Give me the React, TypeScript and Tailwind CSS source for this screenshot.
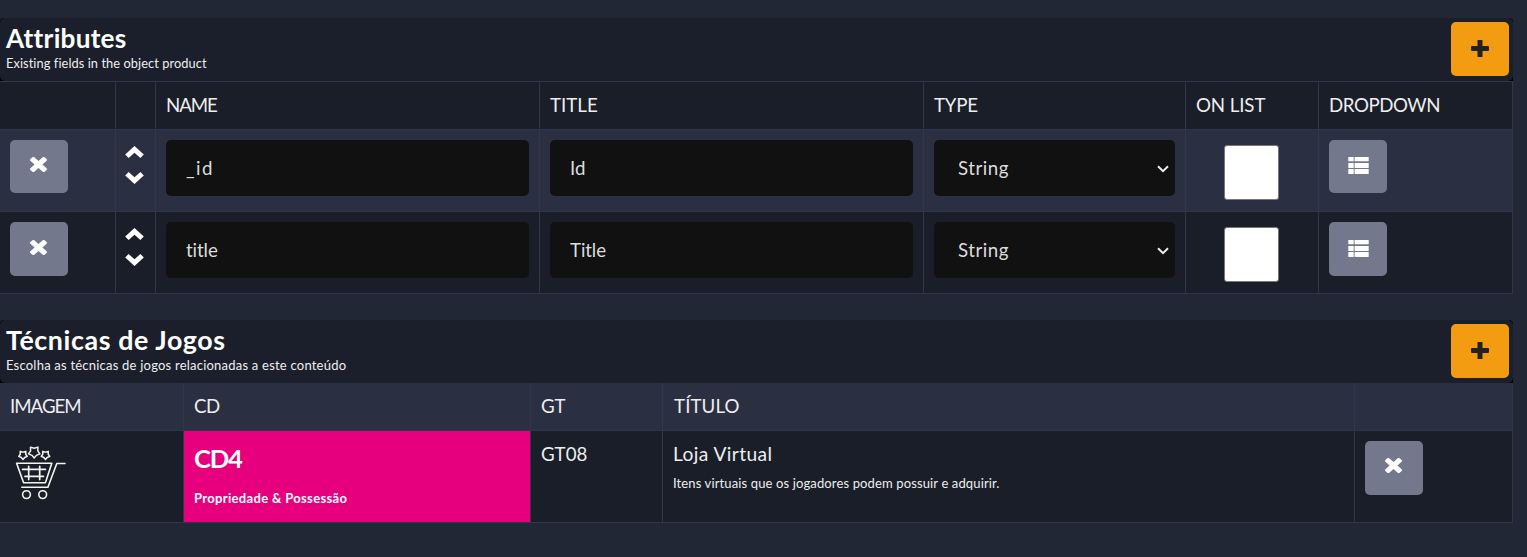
import type { ReactNode } from "react";

function CloseIcon() {
  return (
    <svg className="-ml-px block h-[15px] w-[17px]" viewBox="110 366 1188 1188" preserveAspectRatio="none" fill="currentColor">
      <path d="M1298 1322q0 40-28 68l-136 136q-28 28-68 28t-68-28l-294-294-294 294q-28 28-68 28t-68-28l-136-136q-28-28-28-68t28-68l294-294-294-294q-28-28-28-68t28-68l136-136q28-28 68-28t68 28l294 294 294-294q28-28 68-28t68 28l136 136q28 28 28 68t-28 68l-294 294 294 294q28 28 28 68z" />
    </svg>
  );
}

function PlusIcon() {
  return (
    <svg className="-ml-px block h-[17px] w-[18px]" viewBox="0 0 18 17" fill="currentColor">
      <rect x="0" y="6" width="18" height="5" rx="1" />
      <rect x="6.5" y="0" width="5" height="17" rx="0.6" />
    </svg>
  );
}

function ListIcon() {
  return (
    <svg className="block h-[17px] w-[21px]" viewBox="0 0 21 17" fill="currentColor">
      {[0, 6, 12].map((y) => (
        <g key={y}>
          <rect x="0.3" y={y} width="5.4" height={y === 0 ? 4.2 : 5} rx="0.5" />
          <rect x="6.6" y={y} width="14.1" height={y === 0 ? 4.2 : 5} rx="0.5" />
        </g>
      ))}
    </svg>
  );
}

function Chevron({ down = false }: { down?: boolean }) {
  return (
    <svg className={down ? "block h-3 w-[19px] rotate-180" : "block h-3 w-[19px]"} viewBox="0 0 19 12" fill="currentColor">
      <path d="M9.5 0 18.8 8.5 15.4 12 9.5 6.8 3.6 12 0.2 8.5Z" />
    </svg>
  );
}

function Star({ x, y, r }: { x: number; y: number; r: number }) {
  return (
    <path
      transform={`translate(${x} ${y}) scale(${r})`}
      strokeWidth={1.5 / r}
      d="M0 1 -.36 .56 -.95 .31 -.6 -.18 -.62 -.81 0 -.64 .62 -.81 .6 -.18 .95 .31 .36 .56Z"
    />
  );
}

function CartIcon() {
  return (
    <svg className="block h-[54px] w-[51px]" viewBox="0 0 51 54" fill="none" stroke="#f4f4ee" strokeWidth="1.6" strokeLinejoin="round" strokeLinecap="round">
      <Star x={19.2} y={6} r={6} />
      <Star x={8} y={9} r={4.5} />
      <Star x={30.5} y={9} r={4.5} />
      <path d="M1.6 17.3H36.8L30.4 36.7H8.6ZM50 17.5H41.8L32.9 41.2H6.8" />
      <path d="M7.6 23.4H30.4M10 30.4H28.4M13.7 20.3V33.6M24.7 20.3V33.6" strokeWidth="1.7" />
      <circle cx="11.5" cy="48.6" r="3.9" />
      <circle cx="27.7" cy="48.6" r="3.9" />
    </svg>
  );
}

function GreyButton({ children, className = "h-[54px] pt-[17px]" }: { children: ReactNode; className?: string }) {
  return (
    <button className={`flex w-[58px] justify-center rounded-[5px] bg-[#74788d] text-white ${className}`}>
      {children}
    </button>
  );
}

function PanelHeader({ title, subtitle, titleClass, subClass }: { title: string; subtitle: string; titleClass: string; subClass: string }) {
  return (
    <div className="h-[63px] rounded-t-[4px] bg-black">
      <div className="flex h-full justify-between rounded-[5px] bg-[#1b1f2b] pt-1 pr-1 pl-1.5">
        <div className="whitespace-nowrap">
          <h2 className={`h-8 leading-8 font-bold text-white ${titleClass}`}>{title}</h2>
          <p className={`h-[19px] leading-[19px] ${subClass}`}>{subtitle}</p>
        </div>
        <button className="flex h-[54px] w-[58px] justify-center rounded-[5px] bg-[#f39c12] pt-[18px] text-[#222]">
          <PlusIcon />
        </button>
      </div>
    </div>
  );
}

function Cell({ children, className = "" }: { children?: ReactNode; className?: string }) {
  return <div className={`border-r border-b border-[#32364c] pl-2.5 ${className}`}>{children}</div>;
}

const attributeColumns = "grid grid-cols-[116px_40px_384px_384px_262px_133px_194px]";
const techniqueColumns = "grid grid-cols-[184px_347px_132px_692px_158px]";

function AttributeRow({ name, title, shade, nameClass, titleClass, buttonClass }: { name: string; title: string; shade: string; nameClass: string; titleClass: string; buttonClass: string }) {
  return (
    <div className={`h-[82px] ${attributeColumns} ${shade}`}>
      <Cell className="pt-2.5">
        <GreyButton className={buttonClass}><CloseIcon /></GreyButton>
      </Cell>
      <Cell className="flex flex-col gap-3.5 pt-4 text-white [&>svg]:-ml-px">
        <Chevron />
        <Chevron down />
      </Cell>
      <Cell className="pt-2.5">
        <input defaultValue={name} className={`block h-14 w-[363px] rounded-[5px] bg-[#111] px-5 text-[#ddd] ${nameClass}`} />
      </Cell>
      <Cell className="pt-2.5">
        <input defaultValue={title} className={`block h-14 w-[363px] rounded-[5px] bg-[#111] px-5 text-[#ddd] ${titleClass}`} />
      </Cell>
      <Cell className="pt-2.5">
        <div className="flex h-14 w-[241px] items-center justify-between rounded-[5px] bg-[#111] pr-1.5 pl-6 text-[#ddd]">
          <span className="tracking-[0.5px]">String</span>
          <svg className="mt-0.5 h-2 w-3" viewBox="0 0 12 8" fill="none" stroke="#eee" strokeWidth="2">
            <path d="M1 1.2 6 6.2 11 1.2" />
          </svg>
        </div>
      </Cell>
      <Cell className="pt-[15px]">
        <div className="ml-7 h-[55px] w-[55px] rounded-[3px] border border-[#767676] bg-white" />
      </Cell>
      <Cell className="pt-2.5">
        <GreyButton className={buttonClass}><ListIcon /></GreyButton>
      </Cell>
    </div>
  );
}

export default function App() {
  return (
    <main className="h-[557px] overflow-hidden bg-[#222735] pt-[18px] font-['Lato',sans-serif] text-[18.7px] leading-[29px] text-[#eee]">
      <section className="w-[1513px]">
        <PanelHeader title="Attributes" subtitle="Existing fields in the object product" titleClass="text-[26.2px] tracking-[0.25px]" subClass="text-[12.8px] tracking-[0.08px]" />
        <div className={`h-[49px] border-t border-[#32364c] bg-[#1a1e28] whitespace-nowrap [&>div]:pt-[9px] ${attributeColumns}`}>
          <Cell />
          <Cell />
          <Cell className="tracking-[-1.1px]">NAME</Cell>
          <Cell>TITLE</Cell>
          <Cell className="tracking-[-0.2px]">TYPE</Cell>
          <Cell className="tracking-[-0.1px]">ON LIST</Cell>
          <Cell className="tracking-[-0.45px]">DROPDOWN</Cell>
        </div>
        <AttributeRow name="_id" title="Id" shade="bg-[#2b2f42]" nameClass="tracking-[1.5px]" titleClass="tracking-[0.1px]" buttonClass="h-[53px] pt-[17px]" />
        <AttributeRow name="title" title="Title" shade="bg-[#1a1e28]" nameClass="tracking-[-0.1px]" titleClass="tracking-[-0.1px]" buttonClass="h-[54px] pt-[18px]" />
      </section>

      <section className="mt-[26px] w-[1513px]">
        <PanelHeader title="Técnicas de Jogos" subtitle="Escolha as técnicas de jogos relacionadas a este conteúdo" titleClass="text-[26.8px] tracking-[0.6px]" subClass="text-[13px] tracking-[0.22px]" />
        <div className={`h-12 bg-[#2b2f42] whitespace-nowrap [&>div]:pt-[9px] ${techniqueColumns}`}>
          <Cell className="tracking-[-1px]">IMAGEM</Cell>
          <Cell className="tracking-[-0.5px]">CD</Cell>
          <Cell>GT</Cell>
          <Cell className="pl-[11px] tracking-[0.1px]">TÍTULO</Cell>
          <Cell />
        </div>
        <div className={`h-[92px] bg-[#1a1e28] whitespace-nowrap ${techniqueColumns}`}>
          <Cell className="pt-[15px] pl-[15px]"><CartIcon /></Cell>
          <Cell className="bg-[#e6007e] pt-3 font-bold text-white">
            <div className="-mt-px h-[33px] text-[25.6px] leading-8 tracking-[-1.2px]">CD4</div>
            <div className="pt-[14px] text-[13px] leading-[19px] tracking-[0.33px]">Propriedade &amp; Possessão</div>
          </Cell>
          <Cell className="pt-[9px]">GT08</Cell>
          <Cell className="pt-2">
            <div className="text-[19.2px] tracking-[0.4px]">Loja Virtual</div>
            <div className="pt-1.5 text-[13px] leading-[19px] tracking-[0.13px]">Itens virtuais que os jogadores podem possuir e adquirir.</div>
          </Cell>
          <Cell className="pt-2.5"><GreyButton><CloseIcon /></GreyButton></Cell>
        </div>
      </section>
    </main>
  );
}
